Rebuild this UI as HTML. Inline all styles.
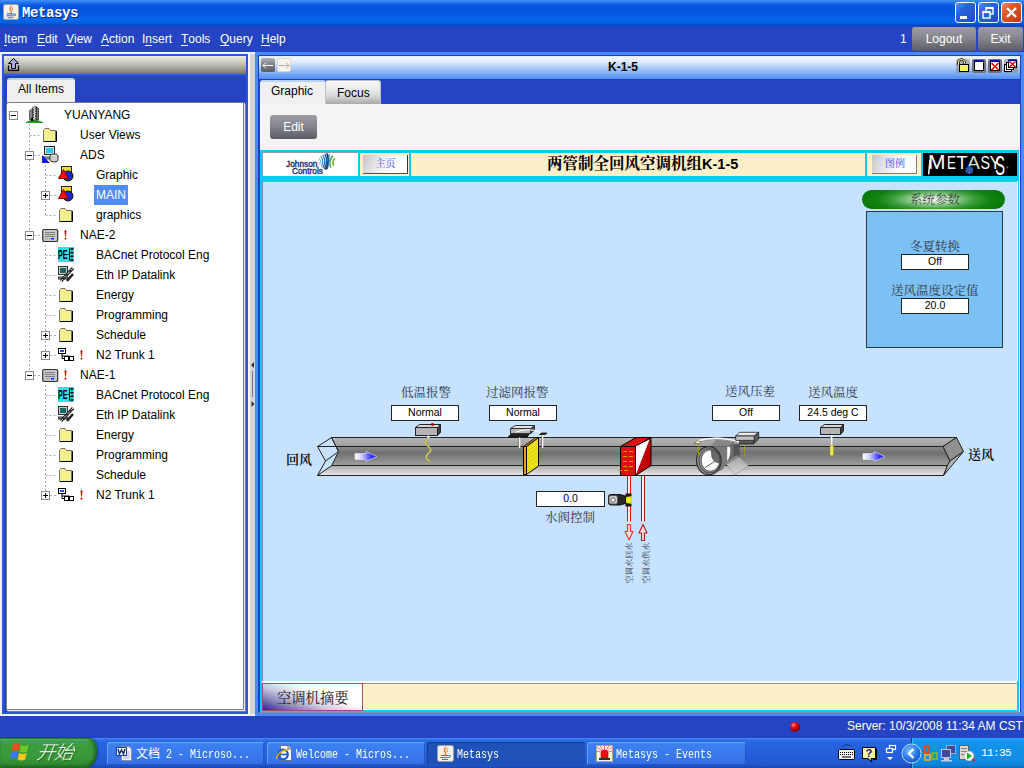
<!DOCTYPE html>
<html><head><meta charset="utf-8"><title>Metasys</title>
<style>
*{box-sizing:border-box;margin:0;padding:0}
html,body{width:1024px;height:768px;overflow:hidden;background:#2444c4;font-family:"Liberation Sans","Noto Sans CJK SC",sans-serif;font-size:13px;color:#000}
.a{position:absolute}
.t{position:absolute;white-space:nowrap;line-height:1}
.cj{font-family:"Liberation Serif","Noto Serif CJK SC",serif}
#titlebar{left:0;top:0;width:1024px;height:26px;background:linear-gradient(#4090f8 0,#2c7cf2 2px,#0a5ce4 5px,#0454dc 8px,#0456e0 13px,#0666ee 19px,#0664ec 22px,#044ccc 25px,#0340b8 26px)}
#menubar{left:0;top:26px;width:1024px;height:26px;background:#2444c4}
.menu{color:#fff;font-size:12px;top:33px}
.menu u{text-decoration:none;display:inline-block;height:13px;border-bottom:1px solid #fff}
.gbtn{border-radius:3px;background:linear-gradient(#9c9ca4 0,#86868e 45%,#5c5c64 100%);color:#fff;text-align:center;font-size:12px}
.vbox{position:absolute;background:#fff;border:1px solid #222;font-size:10.500px;text-align:center;line-height:13px;height:16px}
.lbl{font-size:12.500px;color:#303844}
.row{position:absolute;left:0;height:20px;font-size:12px;line-height:20px;white-space:nowrap}
.tbtn{top:742px;height:23px;border-radius:3px;background:linear-gradient(#5a9af8 0,#3c80f0 2px,#3878ec 60%,#3470e4 100%);box-shadow:inset 1px 1px 0 #6aa4f8,inset -1px -1px 0 #2458c8}
.tbtn.act{background:#1e52b8;box-shadow:inset 1px 1px 1px #143c90}
.tbt{top:748px;color:#fff;font:12px "Liberation Mono",monospace;transform:scaleX(.8333);transform-origin:0 0}
.cjs{font-size:12px;font-family:"Noto Sans CJK SC",sans-serif;line-height:10px}
.wbtn{top:2px;width:21px;height:21px;border:1px solid #fff;border-radius:3px;background:linear-gradient(135deg,#5a8cf0 0,#2a62dc 35%,#2458d0 70%,#1c48b8 100%)}
</style></head><body>
<!-- ===== title bar ===== -->
<div id="titlebar" class="a"></div>
<div class="t" style="left:22px;top:5px;font:bold 14px 'Liberation Mono',monospace;color:#fff;text-shadow:1px 1px 0 #0a2a80;letter-spacing:-0.4px">Metasys</div>
<!-- window buttons -->
<div class="a wbtn" style="left:955px"></div>
<div class="a wbtn" style="left:978px"></div>
<div class="a wbtn" style="left:1001px;background:linear-gradient(135deg,#f09070 0,#e05a30 30%,#d04818 70%,#b83808 100%)"></div>
<svg class="a" style="left:955px;top:2px" width="67" height="21" viewBox="0 0 67 21"><rect x="5" y="14" width="7" height="3" fill="#fff"/><g fill="none" stroke="#fff"><rect x="31" y="6" width="7" height="6" stroke-width="1.400"/><path d="M30.500 6H38.500" stroke-width="2.200"/><rect x="28" y="10" width="7" height="6" fill="#2a62dc" stroke-width="1.400"/><path d="M27.500 10H35.500" stroke-width="2.200"/><path d="M52 6L61 15M61 6L52 15" stroke-width="2.400"/></g></svg>
<!-- ===== menu bar ===== -->
<div id="menubar" class="a"></div>
<div class="t menu" style="left:4px"><u>I</u>tem</div>
<div class="t menu" style="left:37px"><u>E</u>dit</div>
<div class="t menu" style="left:66px"><u>V</u>iew</div>
<div class="t menu" style="left:101px"><u>A</u>ction</div>
<div class="t menu" style="left:142px">I<u>n</u>sert</div>
<div class="t menu" style="left:181px"><u>T</u>ools</div>
<div class="t menu" style="left:220px"><u>Q</u>uery</div>
<div class="t menu" style="left:261px"><u>H</u>elp</div>
<div class="t menu" style="left:900px">1</div>
<div class="a gbtn" style="left:912px;top:27px;width:64px;height:24px;line-height:24px">Logout</div>
<div class="a gbtn" style="left:978px;top:27px;width:45px;height:24px;line-height:24px">Exit</div>

<!-- ===== left panel ===== -->
<div class="a" style="left:0;top:52px;width:255px;height:2px;background:#f4f4ee"></div>
<div class="a" style="left:0;top:52px;width:2px;height:664px;background:#f0efe6"></div>
<div class="a" style="left:2px;top:54px;width:246px;height:660px;background:#2444c4;border:2px solid #2a58dc"></div>
<div class="a" style="left:0;top:714px;width:255px;height:2px;background:#f4f4ee"></div>
<div class="a" style="left:248px;top:54px;width:7px;height:660px;background:linear-gradient(90deg,#fbf8f0 0,#fbf8f0 2px,#d6d6da 2px)"></div>
<div class="a" style="left:4px;top:56px;width:242px;height:18px;background:linear-gradient(#ecece4 0,#d0d0c8 30%,#a8a8a0 65%,#74746c 100%)"></div>
<div class="a" style="left:4px;top:74px;width:242px;height:2px;background:#2a58dc"></div>
<svg class="a" style="left:7px;top:58px" width="13" height="14" viewBox="0 0 13 14"><rect width="13" height="14" fill="#c0c0c8" opacity=".5"/><path d="M6.500 0.500L11.500 5.500H8.500V10.500H4.500V5.500H1.500Z" fill="#a8a8e8" stroke="#000"/><path d="M1.500 7.500V12.500H11.500V7.500" fill="none" stroke="#000" stroke-width="1.400"/></svg>
<div class="a" style="left:7px;top:78px;width:68px;height:25px;background:#f0f0f0;border-top:2px solid #b8d4f4;border-radius:3px 3px 0 0"></div>
<div class="t" style="left:18px;top:83px;font-size:12px">All Items</div>
<div class="a" style="left:6px;top:102px;width:238px;height:608px;background:#fff;border:1px solid #7a7a8a;border-radius:3px 0 0 0;box-shadow:1px 1px 0 #e8e8f0,2px 2px 0 #7a7a8a"></div>
<div id="tree" class="a" style="left:0;top:1px;width:0;height:0">
<svg class="a" style="left:0;top:0" width="248" height="720"><path d="M29.500 123V374" stroke="#a4acc4" stroke-dasharray="2 2"/><path d="M45.500 164V214M45.500 244V354M45.500 384V494" stroke="#a4acc4" stroke-dasharray="2 2"/><path d="M29.5 134.5H41" stroke="#a4acc4" stroke-dasharray="2 2"/><path d="M34 154.5H41" stroke="#a4acc4" stroke-dasharray="2 2"/><path d="M45.5 174.5H57" stroke="#a4acc4" stroke-dasharray="2 2"/><path d="M50 194.5H57" stroke="#a4acc4" stroke-dasharray="2 2"/><path d="M45.5 214.5H57" stroke="#a4acc4" stroke-dasharray="2 2"/><path d="M34 234.5H41" stroke="#a4acc4" stroke-dasharray="2 2"/><path d="M45.5 254.5H57" stroke="#a4acc4" stroke-dasharray="2 2"/><path d="M45.5 274.5H57" stroke="#a4acc4" stroke-dasharray="2 2"/><path d="M45.5 294.5H57" stroke="#a4acc4" stroke-dasharray="2 2"/><path d="M45.5 314.5H57" stroke="#a4acc4" stroke-dasharray="2 2"/><path d="M50 334.5H57" stroke="#a4acc4" stroke-dasharray="2 2"/><path d="M50 354.5H57" stroke="#a4acc4" stroke-dasharray="2 2"/><path d="M34 374.5H41" stroke="#a4acc4" stroke-dasharray="2 2"/><path d="M45.5 394.5H57" stroke="#a4acc4" stroke-dasharray="2 2"/><path d="M45.5 414.5H57" stroke="#a4acc4" stroke-dasharray="2 2"/><path d="M45.5 434.5H57" stroke="#a4acc4" stroke-dasharray="2 2"/><path d="M45.5 454.5H57" stroke="#a4acc4" stroke-dasharray="2 2"/><path d="M45.5 474.5H57" stroke="#a4acc4" stroke-dasharray="2 2"/><path d="M50 494.5H57" stroke="#a4acc4" stroke-dasharray="2 2"/></svg>
<svg class="a" style="left:9px;top:110px" width="9" height="9" viewBox="0 0 9 9"><rect x="0.5" y="0.5" width="8" height="8" fill="#fff" stroke="#8a8a8a"/><path d="M2 4.5H7" stroke="#000"/></svg>
<svg class="a" style="left:26px;top:105px" width="17" height="17" viewBox="0 0 17 17"><path d="M0 16Q8 12 17 16V17H0Z" fill="#1a9a1a"/><path d="M3.500 14V4.500L6.500 2.500V14Z" fill="#a0a0a0" stroke="#333" stroke-width=".7"/><path d="M6.500 14V1.500L10.500 0.500V14Z" fill="#d0d0d0" stroke="#222" stroke-width=".7"/><path d="M10.500 14V1L12.500 2.500V14Z" fill="#787878" stroke="#222" stroke-width=".7"/><path d="M7.500 3V13M9.500 2V13M5 5V13" stroke="#444" stroke-dasharray="1.500 1"/><rect x="5" y="12" width="2" height="3" fill="#000"/></svg>
<div class="row" style="left:64px;top:104px;color:#000">YUANYANG</div>
<svg class="a" style="left:42px;top:127px" width="16" height="14" viewBox="0 0 16 14"><path d="M1.5 13.5V2.5L3 0.5H7L8.5 2.5H13.5V13.5Z" fill="#f4f08c" stroke="#707070"/><path d="M14.5 3V13.5M2 13.5H14.5" stroke="#000" fill="none"/></svg>
<div class="row" style="left:80px;top:124px;color:#000">User Views</div>
<svg class="a" style="left:25px;top:150px" width="9" height="9" viewBox="0 0 9 9"><rect x="0.5" y="0.5" width="8" height="8" fill="#fff" stroke="#8a8a8a"/><path d="M2 4.5H7" stroke="#000"/></svg>
<svg class="a" style="left:42px;top:145px" width="17" height="17" viewBox="0 0 17 17"><rect x="2.5" y="0.5" width="10" height="8" fill="#ddd" stroke="#222"/><rect x="4" y="2" width="7" height="5" fill="#2ec8e8"/><path d="M1 11H13V13H1Z" fill="#bbb" stroke="#444"/><ellipse cx="12" cy="10" rx="4" ry="2" fill="#e8e8e8" stroke="#333"/><path d="M8 10V14A4 2 0 0 0 16 14V10" fill="#ccc" stroke="#333"/><path d="M0 9V17H8Z" fill="#1010f0"/></svg>
<div class="row" style="left:80px;top:144px;color:#000">ADS</div>
<svg class="a" style="left:58px;top:165px" width="16" height="16" viewBox="0 0 16 16"><rect x="3.5" y="0.5" width="10" height="8" fill="#f0e020" stroke="#222"/><circle cx="10" cy="10" r="5" fill="#1428d8" stroke="#111"/><path d="M0.5 12.5L5.5 3.5L10.5 12.5Z" fill="#f01010" stroke="#800"/></svg>
<div class="row" style="left:96px;top:164px;color:#000">Graphic</div>
<svg class="a" style="left:41px;top:190px" width="9" height="9" viewBox="0 0 9 9"><rect x="0.5" y="0.5" width="8" height="8" fill="#fff" stroke="#8a8a8a"/><path d="M2 4.5H7" stroke="#000"/><path d="M4.5 2V7" stroke="#000"/></svg>
<svg class="a" style="left:58px;top:185px" width="16" height="16" viewBox="0 0 16 16"><rect x="3.5" y="0.5" width="10" height="8" fill="#f0e020" stroke="#222"/><circle cx="10" cy="10" r="5" fill="#1428d8" stroke="#111"/><path d="M0.5 12.5L5.5 3.5L10.5 12.5Z" fill="#f01010" stroke="#800"/></svg>
<div class="a" style="left:94px;top:184px;width:34px;height:20px;background:#4f8cf4"></div>
<div class="row" style="left:96px;top:184px;color:#fff">MAIN</div>
<svg class="a" style="left:58px;top:207px" width="16" height="14" viewBox="0 0 16 14"><path d="M1.5 13.5V2.5L3 0.5H7L8.5 2.5H13.5V13.5Z" fill="#f4f08c" stroke="#707070"/><path d="M14.5 3V13.5M2 13.5H14.5" stroke="#000" fill="none"/></svg>
<div class="row" style="left:96px;top:204px;color:#000">graphics</div>
<svg class="a" style="left:25px;top:230px" width="9" height="9" viewBox="0 0 9 9"><rect x="0.5" y="0.5" width="8" height="8" fill="#fff" stroke="#8a8a8a"/><path d="M2 4.5H7" stroke="#000"/></svg>
<svg class="a" style="left:42px;top:226px" width="17" height="15" viewBox="0 0 17 15"><rect x="0.700" y="2.500" width="15" height="12" rx="1.500" fill="#c8c8c8" stroke="#303030" stroke-width="1.200"/><path d="M3 5.500H13M3 7.500H13M3 9.500H13" stroke="#808080"/><path d="M3 12H8" stroke="#888" stroke-dasharray="1 1"/><rect x="9" y="11" width="3" height="1" fill="#1030e0"/><rect x="9" y="12" width="3" height="1" fill="#20c020"/></svg>
<svg class="a" style="left:64px;top:228px" width="4" height="12" viewBox="0 0 4 12"><path d="M1.500 0.500L2.600 2.500L1.900 7.500H1.100L0.400 2.500Z" fill="#f01010"/><path d="M1.500 8.300L2.700 9.700L1.500 11.100L0.300 9.700Z" fill="#f01010"/></svg>
<div class="row" style="left:80px;top:224px;color:#000">NAE-2</div>
<svg class="a" style="left:58px;top:246px" width="16" height="15" viewBox="0 0 16 15"><rect width="16" height="15" fill="#20e8e8"/><text x="0" y="12" font-family="Liberation Sans,sans-serif" font-weight="bold" font-size="12" textLength="9.500" lengthAdjust="spacingAndGlyphs" fill="#000">PE</text><path d="M11.500 1.500V13.500M9.500 7.500H11.500M11.500 2H14M11.500 5.700H14M11.500 9.300H14M11.500 13H14" stroke="#000" fill="none"/><path d="M13.500 0.500L16 2L13.500 3.500ZM13.500 4.200L16 5.700L13.500 7.200ZM13.500 7.800L16 9.300L13.500 10.800ZM13.500 11.500L16 13L13.500 14.500Z" fill="#000"/></svg>
<div class="row" style="left:96px;top:244px;color:#000">BACnet Protocol Eng</div>
<svg class="a" style="left:58px;top:265px" width="16" height="16" viewBox="0 0 16 16"><rect x="0.5" y="0.5" width="9" height="8" fill="#ccc" stroke="#333"/><rect x="2" y="2" width="6" height="5" fill="#186868"/><path d="M0 11H10V13H0Z" fill="#999" stroke="#333"/><path d="M15 2L3 15" stroke="#222" stroke-width="3"/><path d="M15 2L3 15" stroke="#ddd" stroke-width="1" stroke-dasharray="3 2"/><path d="M15 8L9 15" stroke="#222" stroke-width="2.5"/></svg>
<div class="row" style="left:96px;top:264px;color:#000">Eth IP Datalink</div>
<svg class="a" style="left:58px;top:287px" width="16" height="14" viewBox="0 0 16 14"><path d="M1.5 13.5V2.5L3 0.5H7L8.5 2.5H13.5V13.5Z" fill="#f4f08c" stroke="#707070"/><path d="M14.5 3V13.5M2 13.5H14.5" stroke="#000" fill="none"/></svg>
<div class="row" style="left:96px;top:284px;color:#000">Energy</div>
<svg class="a" style="left:58px;top:307px" width="16" height="14" viewBox="0 0 16 14"><path d="M1.5 13.5V2.5L3 0.5H7L8.5 2.5H13.5V13.5Z" fill="#f4f08c" stroke="#707070"/><path d="M14.5 3V13.5M2 13.5H14.5" stroke="#000" fill="none"/></svg>
<div class="row" style="left:96px;top:304px;color:#000">Programming</div>
<svg class="a" style="left:41px;top:330px" width="9" height="9" viewBox="0 0 9 9"><rect x="0.5" y="0.5" width="8" height="8" fill="#fff" stroke="#8a8a8a"/><path d="M2 4.5H7" stroke="#000"/><path d="M4.5 2V7" stroke="#000"/></svg>
<svg class="a" style="left:58px;top:327px" width="16" height="14" viewBox="0 0 16 14"><path d="M1.5 13.5V2.5L3 0.5H7L8.5 2.5H13.5V13.5Z" fill="#f4f08c" stroke="#707070"/><path d="M14.5 3V13.5M2 13.5H14.5" stroke="#000" fill="none"/></svg>
<div class="row" style="left:96px;top:324px;color:#000">Schedule</div>
<svg class="a" style="left:41px;top:350px" width="9" height="9" viewBox="0 0 9 9"><rect x="0.5" y="0.5" width="8" height="8" fill="#fff" stroke="#8a8a8a"/><path d="M2 4.5H7" stroke="#000"/><path d="M4.5 2V7" stroke="#000"/></svg>
<svg class="a" style="left:58px;top:347px" width="16" height="13" viewBox="0 0 16 13"><rect x="0.500" y="0.5" width="7" height="5" fill="#fff" stroke="#000"/><rect x="2" y="2" width="4" height="2" fill="#2050e0"/><path d="M4 6V10.5H6M4 8H11.500V9" stroke="#000" fill="none"/><rect x="6.500" y="8.500" width="4" height="4" fill="#fff" stroke="#000"/><rect x="11.500" y="8.500" width="4" height="4" fill="#fff" stroke="#000"/></svg>
<svg class="a" style="left:80px;top:348px" width="4" height="12" viewBox="0 0 4 12"><path d="M1.500 0.500L2.600 2.500L1.900 7.500H1.100L0.400 2.500Z" fill="#f01010"/><path d="M1.500 8.300L2.700 9.700L1.500 11.100L0.300 9.700Z" fill="#f01010"/></svg>
<div class="row" style="left:96px;top:344px;color:#000">N2 Trunk 1</div>
<svg class="a" style="left:25px;top:370px" width="9" height="9" viewBox="0 0 9 9"><rect x="0.5" y="0.5" width="8" height="8" fill="#fff" stroke="#8a8a8a"/><path d="M2 4.5H7" stroke="#000"/></svg>
<svg class="a" style="left:42px;top:366px" width="17" height="15" viewBox="0 0 17 15"><rect x="0.700" y="2.500" width="15" height="12" rx="1.500" fill="#c8c8c8" stroke="#303030" stroke-width="1.200"/><path d="M3 5.500H13M3 7.500H13M3 9.500H13" stroke="#808080"/><path d="M3 12H8" stroke="#888" stroke-dasharray="1 1"/><rect x="9" y="11" width="3" height="1" fill="#1030e0"/><rect x="9" y="12" width="3" height="1" fill="#20c020"/></svg>
<svg class="a" style="left:64px;top:368px" width="4" height="12" viewBox="0 0 4 12"><path d="M1.500 0.500L2.600 2.500L1.900 7.500H1.100L0.400 2.500Z" fill="#f01010"/><path d="M1.500 8.300L2.700 9.700L1.500 11.100L0.300 9.700Z" fill="#f01010"/></svg>
<div class="row" style="left:80px;top:364px;color:#000">NAE-1</div>
<svg class="a" style="left:58px;top:386px" width="16" height="15" viewBox="0 0 16 15"><rect width="16" height="15" fill="#20e8e8"/><text x="0" y="12" font-family="Liberation Sans,sans-serif" font-weight="bold" font-size="12" textLength="9.500" lengthAdjust="spacingAndGlyphs" fill="#000">PE</text><path d="M11.500 1.500V13.500M9.500 7.500H11.500M11.500 2H14M11.500 5.700H14M11.500 9.300H14M11.500 13H14" stroke="#000" fill="none"/><path d="M13.500 0.500L16 2L13.500 3.500ZM13.500 4.200L16 5.700L13.500 7.200ZM13.500 7.800L16 9.300L13.500 10.800ZM13.500 11.500L16 13L13.500 14.500Z" fill="#000"/></svg>
<div class="row" style="left:96px;top:384px;color:#000">BACnet Protocol Eng</div>
<svg class="a" style="left:58px;top:405px" width="16" height="16" viewBox="0 0 16 16"><rect x="0.5" y="0.5" width="9" height="8" fill="#ccc" stroke="#333"/><rect x="2" y="2" width="6" height="5" fill="#186868"/><path d="M0 11H10V13H0Z" fill="#999" stroke="#333"/><path d="M15 2L3 15" stroke="#222" stroke-width="3"/><path d="M15 2L3 15" stroke="#ddd" stroke-width="1" stroke-dasharray="3 2"/><path d="M15 8L9 15" stroke="#222" stroke-width="2.5"/></svg>
<div class="row" style="left:96px;top:404px;color:#000">Eth IP Datalink</div>
<svg class="a" style="left:58px;top:427px" width="16" height="14" viewBox="0 0 16 14"><path d="M1.5 13.5V2.5L3 0.5H7L8.5 2.5H13.5V13.5Z" fill="#f4f08c" stroke="#707070"/><path d="M14.5 3V13.5M2 13.5H14.5" stroke="#000" fill="none"/></svg>
<div class="row" style="left:96px;top:424px;color:#000">Energy</div>
<svg class="a" style="left:58px;top:447px" width="16" height="14" viewBox="0 0 16 14"><path d="M1.5 13.5V2.5L3 0.5H7L8.5 2.5H13.5V13.5Z" fill="#f4f08c" stroke="#707070"/><path d="M14.5 3V13.5M2 13.5H14.5" stroke="#000" fill="none"/></svg>
<div class="row" style="left:96px;top:444px;color:#000">Programming</div>
<svg class="a" style="left:58px;top:467px" width="16" height="14" viewBox="0 0 16 14"><path d="M1.5 13.5V2.5L3 0.5H7L8.5 2.5H13.5V13.5Z" fill="#f4f08c" stroke="#707070"/><path d="M14.5 3V13.5M2 13.5H14.5" stroke="#000" fill="none"/></svg>
<div class="row" style="left:96px;top:464px;color:#000">Schedule</div>
<svg class="a" style="left:41px;top:490px" width="9" height="9" viewBox="0 0 9 9"><rect x="0.5" y="0.5" width="8" height="8" fill="#fff" stroke="#8a8a8a"/><path d="M2 4.5H7" stroke="#000"/><path d="M4.5 2V7" stroke="#000"/></svg>
<svg class="a" style="left:58px;top:487px" width="16" height="13" viewBox="0 0 16 13"><rect x="0.500" y="0.5" width="7" height="5" fill="#fff" stroke="#000"/><rect x="2" y="2" width="4" height="2" fill="#2050e0"/><path d="M4 6V10.5H6M4 8H11.500V9" stroke="#000" fill="none"/><rect x="6.500" y="8.500" width="4" height="4" fill="#fff" stroke="#000"/><rect x="11.500" y="8.500" width="4" height="4" fill="#fff" stroke="#000"/></svg>
<svg class="a" style="left:80px;top:488px" width="4" height="12" viewBox="0 0 4 12"><path d="M1.500 0.500L2.600 2.500L1.900 7.500H1.100L0.400 2.500Z" fill="#f01010"/><path d="M1.500 8.300L2.700 9.700L1.500 11.100L0.300 9.700Z" fill="#f01010"/></svg>
<div class="row" style="left:96px;top:484px;color:#000">N2 Trunk 1</div>
</div>
<svg class="a" style="left:250px;top:361px" width="5" height="46" viewBox="0 0 5 46"><path d="M4 1V7L1 4Z" fill="#333"/><path d="M2.500 10V36" stroke="#70788c"/><path d="M1.500 40V46L4.500 43Z" fill="#333"/></svg>
<!-- ===== right panel ===== -->
<div class="a" style="left:255px;top:52px;width:769px;height:664px;background:#2444c4"></div>
<div class="a" style="left:255px;top:52px;width:769px;height:3px;background:#4a8af4"></div>
<div class="a" style="left:255px;top:55px;width:3px;height:661px;background:#4a8af4"></div>
<div class="a" style="left:1021px;top:55px;width:3px;height:661px;background:#4a8af4"></div>
<div class="a" style="left:255px;top:713px;width:769px;height:3px;background:#4a8af4"></div>
<div class="a" style="left:258px;top:55px;width:763px;height:25px;border:1px solid #1c3cc0;background:linear-gradient(#e0e8f6 0,#f2f6fe 8%,#e2ecfd 22%,#c4d9fb 40%,#9cc0f8 60%,#6aa0f4 85%,#5090f2 100%)"></div>
<div class="t" style="left:608px;top:61px;font-size:12px;font-weight:bold">K-1-5</div>
<!-- nav buttons -->
<div class="a" style="left:261px;top:58px;width:14px;height:14px;border-radius:2px;background:linear-gradient(#b0b0b8,#7c7c84 50%,#5c5c64)"></div>
<svg class="a" style="left:261px;top:58px" width="14" height="14"><path d="M2 7.500H12M2 7.500L5 4.500M2 7.500L5 10.500" stroke="#fff" fill="none"/></svg>
<div class="a" style="left:277px;top:58px;width:14px;height:14px;border-radius:2px;background:#f6f4ec;border:1px solid #e0d8c4"></div>
<svg class="a" style="left:277px;top:58px" width="14" height="14"><path d="M2 7.500H12M12 7.500L9 4.500M12 7.500L9 10.500" stroke="#b0b0b0" fill="none"/></svg>
<!-- title icons -->
<svg class="a" style="left:956px;top:58px" width="62" height="16" viewBox="0 0 62 16">
<rect x="0" y="1" width="14" height="14" rx="2" fill="#8a8a90" opacity=".6"/><path d="M2.500 7V4.500A3 3 0 0 1 8.500 4.500V5.500" fill="none" stroke="#000" stroke-width="2.600"/><path d="M2.500 7V4.500A3 3 0 0 1 8.500 4.500V5.500" fill="none" stroke="#f4f080" stroke-width="1.200"/><rect x="3.500" y="6.500" width="9" height="7" fill="#f4f060" stroke="#000"/>
<rect x="16" y="1" width="14" height="14" rx="2" fill="#707078"/><rect x="18.500" y="3.500" width="9" height="9" fill="#fff" stroke="#000"/><path d="M18 3H28" stroke="#0000c0" stroke-width="1.500"/>
<rect x="32" y="1" width="14" height="14" rx="2" fill="#707078"/><rect x="34.500" y="3.500" width="9" height="9" fill="#fff" stroke="#000"/><path d="M34 3H44" stroke="#0000c0" stroke-width="1.500"/><path d="M35.500 5L42.500 12M42.500 5L35.500 12" stroke="#f00000" stroke-width="1.600"/>
<rect x="48" y="1" width="14" height="14" rx="2" fill="#8a8a90" opacity=".6"/><rect x="48.500" y="6.500" width="7" height="7" fill="#fff" stroke="#000"/><rect x="50.500" y="4.500" width="7" height="7" fill="#fff" stroke="#000"/><rect x="52.500" y="2.500" width="8" height="7" fill="#fff" stroke="#000"/><path d="M52 2H61" stroke="#0000c0" stroke-width="1.500"/><path d="M53.500 3.500L59.500 9M59.500 3.500L53.500 9" stroke="#f00000" stroke-width="1.600"/>
</svg>
<!-- tabs -->
<div class="a" style="left:260px;top:80px;width:66px;height:25px;background:#f0f0f0;border-top:2px solid #b8d4f4;border-radius:3px 3px 0 0"></div>
<div class="t" style="left:271px;top:85px;font-size:12px">Graphic</div>
<div class="a" style="left:325px;top:80px;width:56px;height:24px;background:linear-gradient(#f6f6f6 0,#ececec 35%,#d8d8d8 65%,#a8a8a8 100%);border:1px solid #b8c0d0;border-bottom:none;border-radius:3px 3px 0 0"></div>
<div class="t" style="left:337px;top:86.500px;font-size:12px">Focus</div>
<!-- content -->
<div class="a" style="left:258px;top:104px;width:763px;height:609px;background:#f4f4f4;border-left:2px solid #2040c0;border-right:1px solid #2040c0;border-bottom:1px solid #8890a0"></div>
<div class="a gbtn" style="left:270px;top:115px;width:47px;height:24px;line-height:24px;font-size:12px">Edit</div>
<!-- graphic frame -->
<div id="gframe" class="a" style="left:260px;top:150px;width:759px;height:562px;background:#08ccf8"></div>
<div class="a" style="left:263px;top:153px;width:95px;height:23px;background:#fff;box-shadow:-1px -1px 0 #8a9aaa"></div>
<div class="a" style="left:360px;top:153px;width:49px;height:23px;background:#fdf0c8"></div>
<div class="a" style="left:411px;top:153px;width:454px;height:23px;background:#fdf0c8"></div>
<div class="a" style="left:867px;top:153px;width:54px;height:23px;background:#fdf0c8"></div>
<div class="a" style="left:923px;top:153px;width:94px;height:23px;background:#000"></div>
<!-- graphic canvas -->
<div id="canvas" class="a" style="left:262px;top:181px;width:755px;height:500px;background:#c6e2ff;border-left:1px solid #7a8a9a;border-top:1px solid #8a9aaa;box-shadow:1px 0 0 #f4faff"></div>
<div class="a" style="left:262px;top:681px;width:755px;height:2px;background:#fff"></div>
<div class="a" style="left:262px;top:683px;width:755px;height:1px;background:#909090"></div>
<div class="a" style="left:262px;top:684px;width:755px;height:26px;background:#fdf0c8"></div>

<!-- ===== graphic content ===== -->
<!-- JC logo -->
<div class="t" style="left:286px;top:158.500px;font:8.300px 'Liberation Sans',sans-serif;color:#16287c;-webkit-text-stroke:.35px #16287c">Johnson</div>
<div class="t" style="left:292px;top:166.300px;font:8.300px 'Liberation Sans',sans-serif;color:#16287c;-webkit-text-stroke:.35px #16287c">Controls</div>
<svg class="a" style="left:317px;top:153px" width="20" height="18" viewBox="0 0 20 18"><g fill="none" stroke-linecap="round"><path d="M2.500 5.500Q4.500 8 3 11" stroke="#58b8d8" stroke-width="1"/><path d="M4 3.500Q7 8 4.500 13" stroke="#3a98cc" stroke-width="1.200"/><path d="M6 2.500Q9.500 8 6 14.500" stroke="#2474bc" stroke-width="1.300"/><path d="M8 1.500Q11.500 8 7.500 15.500" stroke="#1c50a4" stroke-width="1.400"/><path d="M10 1Q13 8 9 16" stroke="#142c84" stroke-width="1.700"/><path d="M12 1.500Q12.500 9 10.500 15.500" stroke="#1a7c8c" stroke-width="1.100"/><path d="M15.500 3Q11.500 8.500 13.500 14" stroke="#2aa04c" stroke-width="1.300"/><path d="M17.500 5.500Q15 9 16.500 12.500" stroke="#6cc030" stroke-width="1.500"/></g></svg>
<!-- header buttons -->
<div class="a" style="left:363px;top:155px;width:45px;height:19px;background:linear-gradient(115deg,#c4c4c4 0,#e4e4e4 30%,#fafaf8 60%,#ffffff 100%);border-right:1.500px solid #343434;border-bottom:1px solid #505050"></div>
<div class="t cj" style="left:375.500px;top:159px;font-size:10px;color:#4848f8">主页</div>
<div class="a" style="left:872px;top:155px;width:45px;height:19px;background:linear-gradient(115deg,#c4c4c4 0,#e4e4e4 30%,#fafaf8 60%,#ffffff 100%);border-right:1px solid #7c7c7c;border-bottom:1px solid #7c7c7c"></div>
<div class="t cj" style="left:885px;top:159px;font-size:10px;color:#4848f8">图例</div>
<div class="t" style="left:547px;top:156px;font-size:15px;font-weight:bold"><span class="cj" style="font-size:15.500px">两管制全回风空调机组</span><span style="font-size:14.500px">K-1-5</span></div>
<!-- METASYS -->
<svg class="a" style="left:923px;top:153px" width="94" height="23" viewBox="923 153 94 23" font-family="Liberation Sans,sans-serif" fill="#fff">
<path d="M930 160L928.600 174.500" stroke="#fff" stroke-width="1.500"/>
<text x="928" y="168.500" font-size="19.500" textLength="17.500" lengthAdjust="spacingAndGlyphs">M</text>
<text x="947" y="168.500" font-size="18.400" textLength="9" lengthAdjust="spacingAndGlyphs">E</text>
<text x="956.500" y="168.500" font-size="18.400" textLength="11" lengthAdjust="spacingAndGlyphs">T</text>
<text x="967" y="168.500" font-size="18.400" textLength="13" lengthAdjust="spacingAndGlyphs" fill="#d4e0dc">A</text>
<text x="980.500" y="168.500" font-size="18.400" textLength="9.500" lengthAdjust="spacingAndGlyphs">S</text>
<text x="989.500" y="168.500" font-size="18.400" textLength="11.500" lengthAdjust="spacingAndGlyphs">Y</text>
<text x="995" y="174.600" font-size="28.500" textLength="10" lengthAdjust="spacingAndGlyphs">S</text>
<circle cx="969.300" cy="170" r="4" fill="#163c90"/><path d="M966 169Q969 166.500 972.500 169M966 171.500Q969 174 972.500 171.500M969.300 166V174M965.500 170H973" stroke="#4c78c8" stroke-width=".7" fill="none"/>
<text x="1006" y="169" font-size="3">®</text>
</svg>
<!-- parameters box -->
<div class="a" style="left:862px;top:190px;width:143px;height:19px;border-radius:10px;background:radial-gradient(ellipse 50% 85% at 50% 50%,#ffffff 0,#d4ead4 16%,#84c484 36%,#3a9c3a 58%,#128212 80%,#0a7a0a 100%)"></div>
<div class="t cj" style="left:910px;top:193.500px;font-size:12.500px;color:#38443a">系统参数</div>
<div class="a" style="left:866px;top:211px;width:137px;height:137px;background:#7cc0f4;border:1px solid #283848"></div>
<div class="t cj lbl" style="left:910px;top:241px">冬夏转换</div>
<div class="vbox" style="left:901px;top:254px;width:68px">Off</div>
<div class="t cj lbl" style="left:891px;top:285px">送风温度设定值</div>
<div class="vbox" style="left:901px;top:298px;width:68px">20.0</div>
<!-- labels -->
<div class="t cj lbl" style="left:401px;top:387px">低温报警</div>
<div class="vbox" style="left:391px;top:405px;width:68px">Normal</div>
<div class="t cj lbl" style="left:486px;top:387px">过滤网报警</div>
<div class="vbox" style="left:489px;top:405px;width:68px">Normal</div>
<div class="t cj lbl" style="left:725px;top:386px">送风压差</div>
<div class="vbox" style="left:712px;top:405px;width:68px">Off</div>
<div class="t cj lbl" style="left:808px;top:387px">送风温度</div>
<div class="vbox" style="left:799px;top:405px;width:68px">24.5 deg C</div>
<div class="vbox" style="left:536px;top:491px;width:69px">0.0</div>
<div class="t cj lbl" style="left:545px;top:512px">水阀控制</div>
<div class="t cj" style="left:286px;top:453px;font-size:13px;font-weight:600">回风</div>
<div class="t cj" style="left:968px;top:448px;font-size:13px;font-weight:600">送风</div>
<!-- bottom tab -->
<div class="a" style="left:262px;top:683px;width:101px;height:28px;border:1.500px solid #a84870;background:linear-gradient(20deg,#28288c 0,#7878b4 18%,#c8c8e0 38%,#ffffff 62%)"></div>
<div class="t cj" style="left:277px;top:690.500px;font-size:14.300px;color:#202020">空调机摘要</div>
<!-- ===== duct svg ===== -->
<svg id="duct" class="a" style="left:260px;top:380px" width="760" height="220" viewBox="260 380 760 220">
<defs>
<linearGradient id="gt" x1="0" y1="0" x2="0" y2="1"><stop offset="0" stop-color="#b8b8b8"/><stop offset="1" stop-color="#9c9c9c"/></linearGradient>
<linearGradient id="gm" x1="0" y1="0" x2="0" y2="1"><stop offset="0" stop-color="#8c8c8c"/><stop offset=".35" stop-color="#707070"/><stop offset="1" stop-color="#a0a0a0"/></linearGradient>
<linearGradient id="gb" x1="0" y1="0" x2="0" y2="1"><stop offset="0" stop-color="#a8a8a8"/><stop offset="1" stop-color="#e8e8e8"/></linearGradient>
<linearGradient id="ga" x1="0" y1="0" x2="1" y2="0"><stop offset="0" stop-color="#ffffff"/><stop offset=".3" stop-color="#d0d0ff"/><stop offset=".75" stop-color="#3030ff"/><stop offset="1" stop-color="#2020f0"/></linearGradient>
<linearGradient id="gd" x1="0" y1="0" x2="0" y2="1"><stop offset="0" stop-color="#a4a4a4"/><stop offset="1" stop-color="#d8d8d8"/></linearGradient>
</defs>
<g stroke="#222" stroke-width="1" stroke-linejoin="round">
<path d="M331.500 437.500H956.500L943 446.500H336Z" fill="url(#gt)"/>
<path d="M336 446.500H943L950 461L947.500 465.500H331.800L338.500 451.500Z" fill="url(#gm)"/>
<path d="M331.800 465.500H947.500L943.500 475.500H317.500Z" fill="url(#gb)"/>
<path d="M336 446.500H317.500L331.500 437.500L338.500 451.500L325.500 461L317.500 475.500M317.500 446.500L325.500 461" fill="none"/>
<path d="M943 446.500L956.500 437.500L963.500 451.500L950 461Z" fill="#909090"/>
<path d="M950 461L963.500 451.500L943.500 475.500L947.500 465.500Z" fill="#b0b0b0"/>
</g>
<path d="M355 453.500H366V451.500L377 456.500L366 461.500V459.500H355Z" fill="url(#ga)" stroke="#e8e8f8" stroke-width=".6"/>
<path d="M863 453.500H874V451.500L885 456.500L874 461.500V459.500H863Z" fill="url(#ga)" stroke="#e8e8f8" stroke-width=".6"/>
<!-- components -->
<g stroke-linejoin="round">
<!-- low temp sensor -->
<path d="M415.500 427.500L419.500 424.500H440.500V432L437.500 435.500H415.500Z" fill="#d8d8d8" stroke="#222"/>
<path d="M437.500 427.500L440.500 424.500V432L437.500 435.500Z" fill="#404040" stroke="#222"/>
<rect x="415.500" y="427.500" width="22" height="8" fill="#b4b4b4" stroke="#222"/>
<rect x="431.500" y="423.500" width="2" height="2" fill="#e00000" stroke="#800000" stroke-width=".5"/>
<circle cx="428.300" cy="437" r="1.500" fill="#f4f4f4" stroke="#888" stroke-width=".5"/>
<path d="M428 439C420 444 434 447 430 452C424 456 426 460 430 461" fill="none" stroke="#a8a040" stroke-width="2"/>
<path d="M428 439C420 444 434 447 430 452C424 456 426 460 430 461" fill="none" stroke="#f0e890" stroke-width=".8"/>
<!-- filter -->
<path d="M519.500 437V448M542.500 434V448" stroke="#fff" stroke-width="1.600"/>
<path d="M518.500 437V448M541.500 434V448" stroke="#807030" stroke-width=".7"/>
<path d="M523.500 446.500L526.500 446.500V474.500H523.500Z" fill="#e8a020" stroke="#000"/>
<path d="M526.500 446.500L538.500 437.500V466L526.500 474.500Z" fill="#ece418" stroke="#000"/>
<path d="M523.500 446.500L535.500 437.500H538.500L526.500 446.500Z" fill="#c88020" stroke="#000" stroke-width=".8"/>
<path d="M528 447L537 440M528 451L537 444M528 455L537 448M528 459L537 452M528 463L537 456M528 467L537 460M528 471L537 464" stroke="#c8b800" stroke-width=".8" stroke-dasharray="1 1"/>
<path d="M508.500 437L512 433H530L527 437Z" fill="#202020" stroke="#111"/>
<path d="M510.500 428.500L515.500 425.500H534.500V430L530.500 433.500H510.500Z" fill="#e4e4e4" stroke="#333"/>
<path d="M530.500 428.500L534.500 425.500V430L530.500 433.500Z" fill="#505050" stroke="#333"/>
<rect x="510.500" y="428.500" width="20" height="5" fill="#b8b8b8" stroke="#333"/>
<path d="M516 432Q530 427 542 433" fill="none" stroke="#fff" stroke-width="1.200"/>
<path d="M539.500 434.500L541.500 433H547L545 434.500Z" fill="#222" stroke="#111" stroke-width=".8"/>
<!-- coil -->
<path d="M620.500 446.500L636 437.500H651L635.500 446.500Z" fill="#e01010" stroke="#000"/>
<path d="M635.500 446.500L651 437.500V465.500L635.500 475.500Z" fill="#c00000" stroke="#000"/>
<path d="M635.500 446.500L649.500 439.500L636 474.500Z" fill="#fff"/>
<rect x="620.500" y="446.500" width="15" height="29" fill="#e01010" stroke="#000"/>
<path d="M623 451.500H627M629 451.500H633M623 456.500H627M629 456.500H633M623 461.500H627M629 461.500H633M623 466.500H627M629 466.500H633M618 470.500H622M624 470.500H628" stroke="#f09010" stroke-width="1.200"/>
<!-- pipes -->
<path d="M627.500 476V521.500M630.500 476V521.500" stroke="#f01010" stroke-width="1"/>
<path d="M629 476V521.500" stroke="#fff0f0" stroke-width="2"/>
<path d="M641.500 476V521.500M644.500 476V521.500" stroke="#b01818" stroke-width="1"/>
<path d="M643 476V521.500" stroke="#fff0f0" stroke-width="2"/>
<path d="M627.500 524.500V531.500H625L629 540L633 531.500H630.500V524.500Z" fill="#ffd8d8" stroke="#f03030" stroke-width="1.100"/>
<path d="M641.500 540.500V533H639L643 524.500L647 533H644.500V540.500Z" fill="#f8d8d8" stroke="#a82020" stroke-width="1.100"/>
<!-- valve -->
<rect x="625.500" y="493.500" width="6" height="13" fill="#181800" />
<path d="M626 497L632 496V504L626 503Z" fill="#d8d800"/>
<circle cx="629" cy="500" r="2.600" fill="#f0f000"/>
<path d="M608.500 496.500Q608.500 494.500 611 494.500H620L625.500 496V503.500L620 505H611Q608.500 505 608.500 503Z" fill="#282828" stroke="#111"/>
<rect x="609" y="495.500" width="8.500" height="8.500" rx="2" fill="#d0d0d0" stroke="#555"/>
<circle cx="613" cy="500" r="2.300" fill="#f0f0f0" stroke="#444" stroke-width=".8"/>
<!-- fan -->
<path d="M709.700 446.400L716.400 439.400H734L727 446.400Z" fill="#868686"/>
<path d="M709.700 446.400H727V463L722 470L709 475Z" fill="#7a7a7a"/>
<path d="M727 446.400L734 441V457L727 463Z" fill="#6c6c6c"/>
<path d="M733.800 444H739.700V457.500L733.800 460Z" fill="#545454"/>
<path d="M727.200 446.800H730Q731.500 454 727.200 461.500Z" fill="#fdfdfd"/>
<path d="M726 462.500L737 455L739 456.800L726.700 464.600Z" fill="#8a8a8a"/>
<path d="M726.700 464.600L739 456.800L748.300 465.700L735.300 475Z" fill="url(#gd)" stroke="#8c8c8c" stroke-width=".6"/>
<ellipse cx="708.800" cy="460.700" rx="12.300" ry="14.100" fill="#8e8e8e" stroke="#2c2c2c" stroke-width="1.100"/>
<ellipse cx="709.600" cy="460.700" rx="10.700" ry="12.300" fill="none" stroke="#3a3a3a" stroke-width=".8"/>
<ellipse cx="710.400" cy="460.600" rx="9.200" ry="10.600" fill="#fefefe" stroke="#444" stroke-width=".7"/>
<path d="M711.200 450.100L715.600 451.600L719.600 456.400V463.100L714.500 461.600L711.900 457.200Z" fill="#6a6a6a" stroke="#3c3c3c" stroke-width=".6"/>
<path d="M704.800 467.600L714.500 461.600" stroke="#3c3c3c" stroke-width=".8"/>
<path d="M697 441.600Q717 435.500 739.700 442.400" fill="none" stroke="#9a9a9a" stroke-width="2.600"/>
<path d="M697 441Q717 435 739.700 441.800" fill="none" stroke="#fafafa" stroke-width="1.600"/>
<path d="M694 443.500L697.200 440.500L701 441.800L699.500 443.500Z" fill="#f4f0c0" stroke="#4c4820" stroke-width=".6"/>
<path d="M698.400 444V456.400M744.500 445V456.500" stroke="#a09820" stroke-width="1"/>
<path d="M739 440.500H754V444.500H739Z" fill="#3c3c3c"/>
<path d="M739 442H753" stroke="#8c8c8c" stroke-width=".8"/>
<path d="M735.700 436L739.400 432.300H758.700L754.200 436Z" fill="#e8e8e8" stroke="#222" stroke-width=".8"/>
<path d="M754.200 436L758.700 432.300V439L754.200 443.400Z" fill="#5c5c5c" stroke="#222" stroke-width=".8"/>
<rect x="735.700" y="436" width="18.500" height="4.400" fill="#c0c0c0" stroke="#222" stroke-width=".8"/>
<!-- supply temp sensor -->
<path d="M820.500 427.500L824.500 424.500H843.500V430.500L840.500 434.500H820.500Z" fill="#d8d8d8" stroke="#222"/>
<path d="M840.500 427.500L843.500 424.500V430.500L840.500 434.500Z" fill="#404040" stroke="#222"/>
<rect x="820.500" y="427.500" width="20" height="7" fill="#b4b4b4" stroke="#222"/>
<path d="M831.500 435V446" stroke="#fff" stroke-width="1.800"/>
<path d="M830.400 435V446" stroke="#999" stroke-width=".6"/>
<rect x="830" y="445.500" width="3.500" height="10" fill="#f0ec50" stroke="#a09820" stroke-width=".6"/>
</g>
<g font-family="Liberation Serif,Noto Serif CJK SC,serif" font-size="8.200" fill="#363c46">
<text transform="translate(631.500 583.500) rotate(-90)">空调水回水</text>
<text transform="translate(648.500 583.500) rotate(-90)">空调水供水</text>
</g>
</svg>
<!-- ===== status bar ===== -->
<div class="a" style="left:0;top:716px;width:1024px;height:22px;background:#2444c4"></div>
<div class="t" style="left:847px;top:720px;color:#fff;font-size:12px">Server: 10/3/2008 11:34 AM CST</div>
<!-- ===== taskbar ===== -->
<div id="taskbar" class="a" style="left:0;top:738px;width:1024px;height:30px;background:linear-gradient(#4a8cf4 0,#2c6ee8 2px,#2864e0 5px,#2660dc 12px,#245cd8 22px,#2256cc 27px,#1c46ac 30px)"></div>
<!-- start -->
<div class="a" style="left:0;top:738px;width:97px;height:30px;border-radius:0 8px 12px 0/0 12px 16px 0;background:linear-gradient(#5cb85c 0,#3fa23f 3px,#3c9c3c 8px,#3a9a3a 18px,#349034 24px,#2a7c2a 30px);box-shadow:inset -3px 0 4px -1px #1c5c1c,inset 0 1px 0 #2c7c34,inset 0 2px 1px #62b862,inset 0 -2px 2px #246c24,1px 0 2px #1a3c90"></div>
<svg class="a" style="left:10px;top:742px" width="21" height="21" viewBox="0 0 21 21"><defs><filter id="bl" x="-.1" y="-.1" width="1.200" height="1.200"><feGaussianBlur stdDeviation=".35"/></filter></defs><g filter="url(#bl)"><path d="M3 2.500Q6.500 0.500 10 2.500L8.500 9Q5.500 7 1.500 9Z" fill="#f0501c"/><path d="M11 3Q14.500 5 18.500 3L17 9.500Q13.500 11.500 9.500 9.500Z" fill="#6cc820"/><path d="M1.200 10.500Q5 8.500 8.200 10.500L6.700 17Q3.500 15 0 17Z" fill="#3c78f0"/><path d="M9.200 11Q13 13 16.700 11L15.200 17.500Q11.500 19.500 7.700 17.500Z" fill="#f8c818"/></g></svg>
<div class="t" style="left:36.500px;top:736.500px;font:italic 19px 'Liberation Sans','Noto Sans CJK SC',sans-serif;color:#fff;font-weight:300;text-shadow:1px 1px 1px #1c5c1c;letter-spacing:-1px;transform:skewX(-8deg)">开始</div>
<!-- task buttons -->
<div class="a tbtn" style="left:107px;width:157px"></div>
<div class="a tbtn" style="left:267px;width:158px"></div>
<div class="a tbtn act" style="left:427px;width:158px"></div>
<div class="a tbtn" style="left:587px;width:159px"></div>
<div class="t" style="left:136px;top:746px;color:#fff;font:12px 'Noto Sans CJK SC',sans-serif;line-height:14px">文档</div>
<div class="t tbt" style="left:166px">2 - Microso...</div>
<div class="t tbt" style="left:296px">Welcome - Micros...</div>
<div class="t tbt" style="left:457px">Metasys</div>
<div class="t tbt" style="left:616px">Metasys - Events</div>
<!-- word icon -->
<svg class="a" style="left:116px;top:745px" width="17" height="17" viewBox="0 0 17 17"><path d="M5.500 1.500H13L15.500 4V15.500H5.500Z" fill="#f4f4f8" stroke="#8890a8"/><path d="M7 7H14M7 9H14M7 11H14M7 13H14" stroke="#a8b0c8" stroke-width=".8"/><rect x="0.500" y="2.500" width="10" height="8" fill="#fff" stroke="#203c98"/><path d="M2 4L3.500 9L5.500 5L7.500 9L9 4" fill="none" stroke="#102c88" stroke-width="1.500"/></svg>
<!-- ie icon -->
<svg class="a" style="left:276px;top:745px" width="17" height="17" viewBox="0 0 17 17"><path d="M4.500 0.500H12L15.500 4V15.500H4.500Z" fill="#fcfcf8" stroke="#707070"/><path d="M12 0.500V4H15.500" fill="#d8d8d0" stroke="#707070"/><circle cx="7" cy="9.500" r="4.800" fill="none" stroke="#1c5cd8" stroke-width="2.200"/><path d="M3 9.500H11" stroke="#1c5cd8" stroke-width="1.600"/><path d="M0.500 14Q1 7 12.500 4" fill="none" stroke="#f0a818" stroke-width="1.300"/></svg>
<!-- java icons -->
<svg class="a" style="left:437px;top:745px" width="17" height="17" viewBox="0 0 17 17"><rect x="0.500" y="0.500" width="16" height="16" rx="2" fill="#f0f0ec" stroke="#a0a0a0"/><path d="M9 2Q6 5 8.500 7.500Q9.500 9 8 10" fill="none" stroke="#e87818" stroke-width="1.300"/><path d="M10.500 3.500Q9 5.500 10.500 7" fill="none" stroke="#e87818" stroke-width="1"/><path d="M4 10.500H11.500M3.500 12.500H12M5 14.500H11M12 10.500Q14.500 11 12.500 12.500" fill="none" stroke="#4878a8" stroke-width="1.100"/></svg>
<svg class="a" style="left:3px;top:4px" width="16" height="16" viewBox="0 0 17 17"><rect x="0.500" y="0.500" width="16" height="16" rx="2" fill="#f0f0ec" stroke="#a0a0a0"/><path d="M9 2Q6 5 8.500 7.500Q9.500 9 8 10" fill="none" stroke="#e87818" stroke-width="1.300"/><path d="M10.500 3.500Q9 5.500 10.500 7" fill="none" stroke="#e87818" stroke-width="1"/><path d="M4 10.500H11.500M3.500 12.500H12M5 14.500H11M12 10.500Q14.500 11 12.500 12.500" fill="none" stroke="#4878a8" stroke-width="1.100"/></svg>
<!-- alarm icon -->
<svg class="a" style="left:596px;top:745px" width="17" height="17" viewBox="0 0 17 17"><rect x="0.500" y="0.500" width="16" height="16" fill="#fff8f0" stroke="#c0a090"/><path d="M8.500 8L1 2M8.500 8L4 0.500M8.500 8L8.500 0M8.500 8L13 0.500M8.500 8L16 2M8.500 8L0.500 6M8.500 8L16.500 6" stroke="#f06050" stroke-width=".9"/><path d="M5 13V8.500A3.500 3.500 0 0 1 12 8.500V13Z" fill="#e81010" stroke="#a00000" stroke-width=".6"/><rect x="3" y="13" width="11" height="2" fill="#303030"/></svg>
<!-- tray -->
<div class="a" style="left:911px;top:738px;width:113px;height:30px;background:linear-gradient(#2ca4f4 0,#1494ec 3px,#1290e8 12px,#128ce4 22px,#1082d8 27px,#0c68b8 30px);border-left:1px solid #0c3c98;box-shadow:inset 1px 0 0 #3cb0f8"></div>
<svg class="a" style="left:836px;top:742px" width="62" height="22" viewBox="0 0 62 22"><path d="M6 5Q10 1 15 4" fill="none" stroke="#000" stroke-dasharray="1 1"/><rect x="2.500" y="7.500" width="16" height="10" rx="1" fill="#f0f0f0" stroke="#000"/><path d="M4 10.500H17M4 12.500H17" stroke="#000" stroke-dasharray="1 1"/><path d="M6 15H15" stroke="#000"/>
<path d="M26.500 5.500H39.500V16.500H35L36 20L32 16.500H26.500Z" fill="#fcf4a0" stroke="#000"/><path d="M40.500 7V17.500H37" stroke="#000" fill="none"/><text x="29.500" y="15" font-family="Liberation Sans,sans-serif" font-weight="bold" font-size="11" fill="#101080">?</text>
<rect x="53.500" y="3.500" width="6" height="4" fill="none" stroke="#fff" stroke-width="1.200"/><rect x="50.500" y="6.500" width="6" height="4" fill="#2660dc" stroke="#fff" stroke-width="1.200"/><path d="M51 15H57L54 18Z" fill="#fff"/></svg>
<svg class="a" style="left:901px;top:743px" width="21" height="21" viewBox="0 0 21 21"><defs><radialGradient id="cg" cx=".4" cy=".35" r=".7"><stop offset="0" stop-color="#7cc0ff"/><stop offset=".6" stop-color="#2878e8"/><stop offset="1" stop-color="#1450c0"/></radialGradient></defs><circle cx="10.500" cy="10.500" r="9.500" fill="url(#cg)" stroke="#bcd8f8" stroke-width="1"/><path d="M12.500 6L8 10.500L12.500 15" fill="none" stroke="#fff" stroke-width="2.400"/></svg>
<svg class="a" style="left:922px;top:744px" width="56" height="20" viewBox="0 0 56 20"><g fill="none" stroke-width="1.800"><rect x="2" y="2" width="5" height="6" stroke="#e84818"/><rect x="3" y="11" width="5" height="5" stroke="#f0a818"/><rect x="10" y="9" width="5" height="6" stroke="#78b828"/><path d="M10 3H14V6" stroke="#4888e0" stroke-width="1.200"/></g>
<rect x="24.500" y="1.500" width="9" height="8" fill="#404898" stroke="#a0a8c8"/><rect x="19.500" y="5.500" width="9" height="8" fill="#404898" stroke="#c0c8e0"/><path d="M22 14H27V16H30V17.500H19V16H22Z" fill="#c8c8d8"/>
<rect x="37.500" y="1.500" width="9" height="14" fill="#d8d8d0" stroke="#606060"/><path d="M39 4.500H45M39 7.500H45M39 10.500H45" stroke="#808080"/><circle cx="47" cy="12" r="5" fill="#fff" stroke="#909090" stroke-width=".6"/><path d="M45 8.500L50 12L45 15.500Z" fill="#18b018"/><path d="M50 15L53 16.500M51.500 14.500V17.500" stroke="#e01010" stroke-width="1"/></svg>
<div class="t" style="left:981px;top:747px;font:11px 'Liberation Mono',monospace;color:#fff;letter-spacing:-0.6px">11:35</div>
<!-- status red ball -->
<svg class="a" style="left:789px;top:721px" width="12" height="12"><defs><radialGradient id="rb" cx=".35" cy=".3" r=".75"><stop offset="0" stop-color="#ff9080"/><stop offset=".35" stop-color="#e81010"/><stop offset="1" stop-color="#700000"/></radialGradient></defs><circle cx="6" cy="6" r="5" fill="url(#rb)"/></svg>
</body></html>
